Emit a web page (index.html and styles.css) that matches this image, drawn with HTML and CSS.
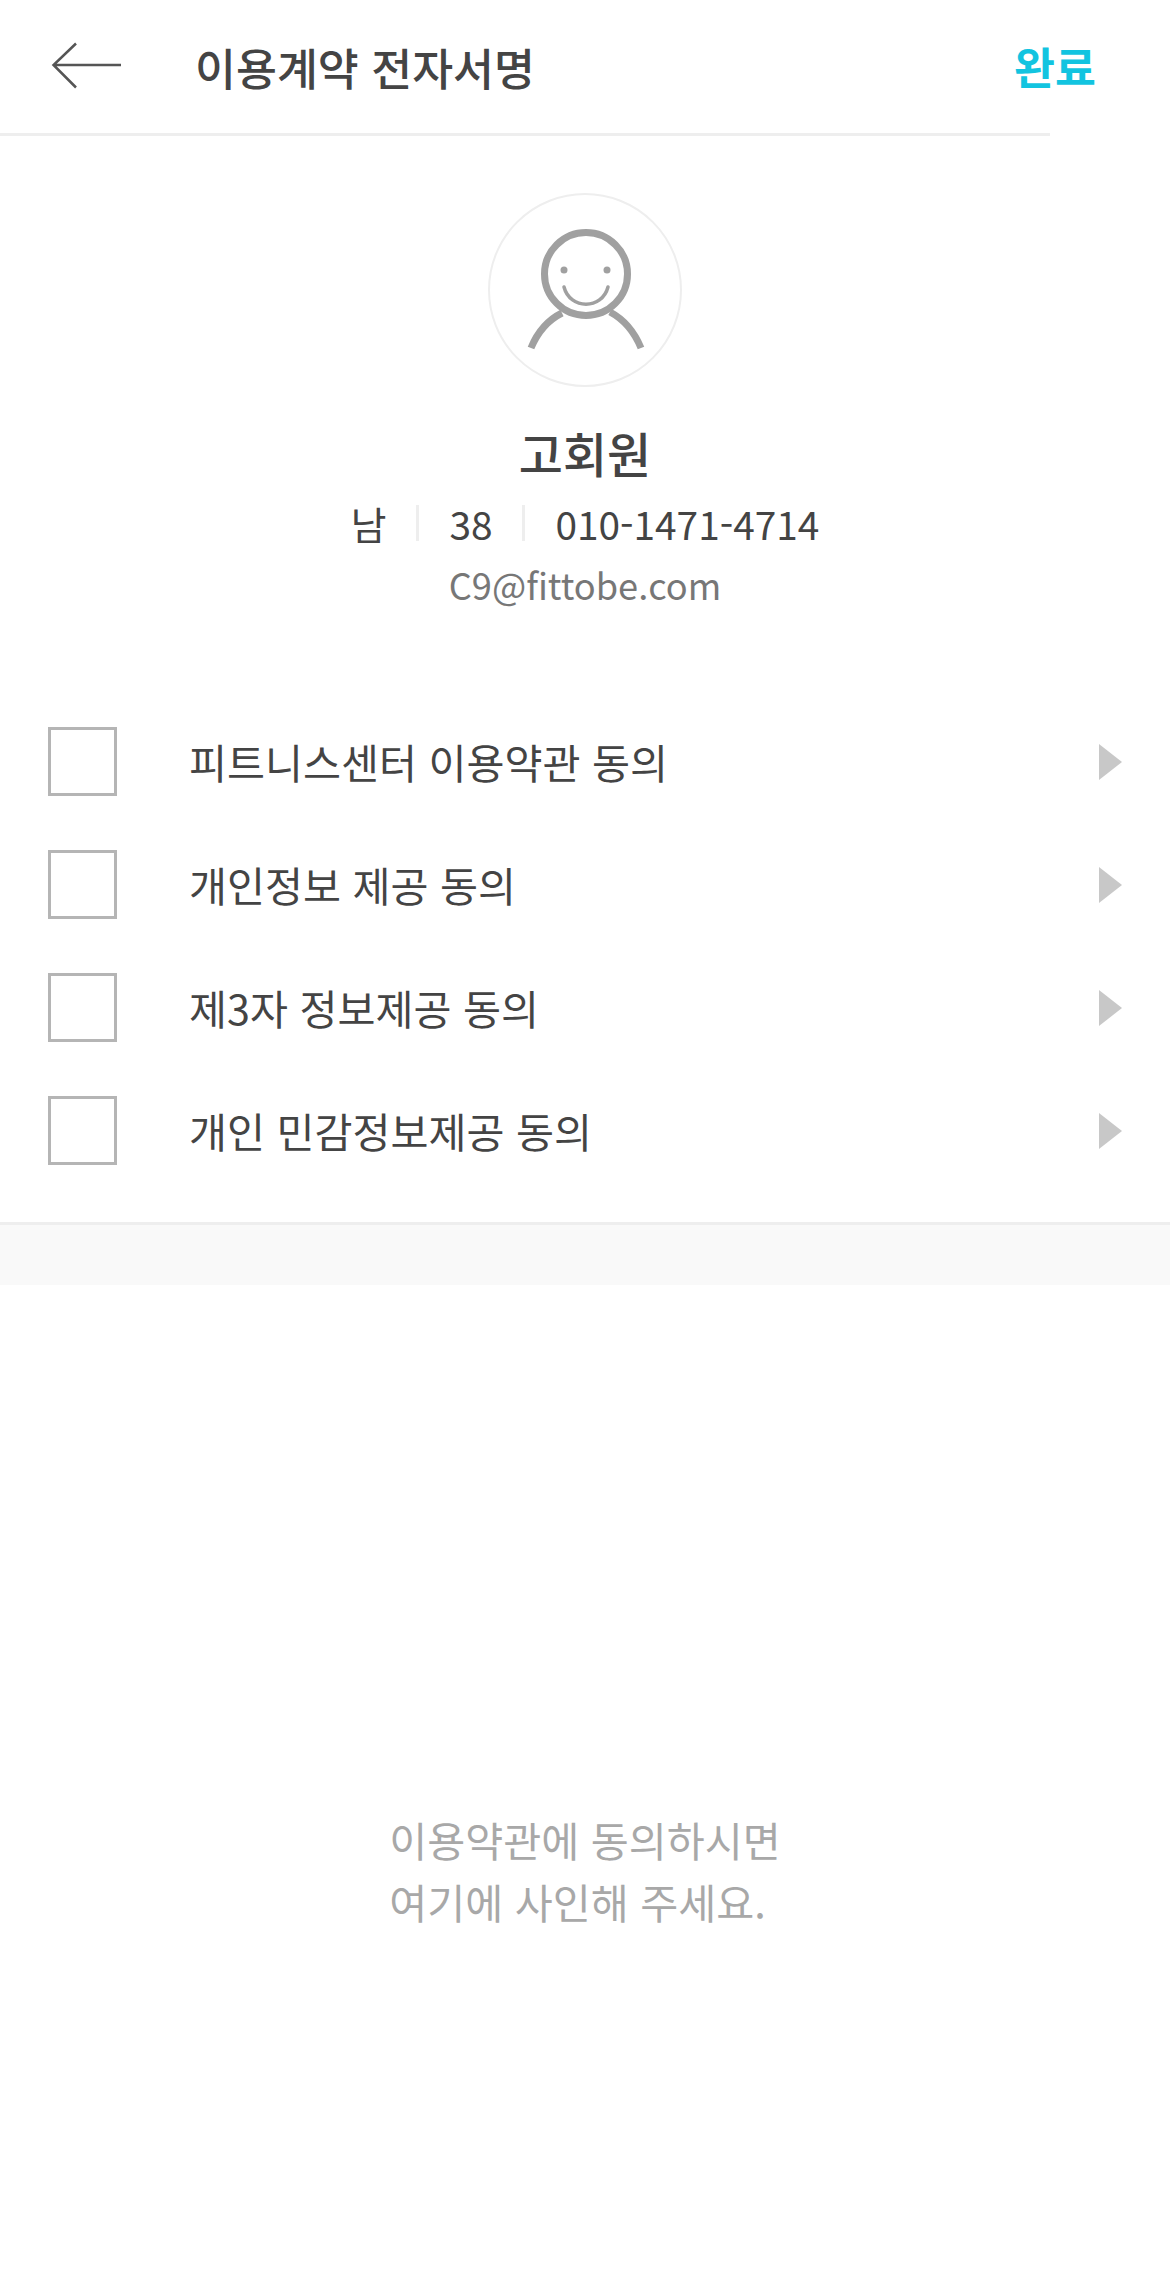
FILE: index.html
```html
<!DOCTYPE html>
<html lang="ko">
<head>
    <meta charset="UTF-8">
    <meta name="viewport" content="width=device-width, initial-scale=1.0">
    <title>이용계약 전자서명</title>
    <link rel="stylesheet" href="styles.css">
</head>
<body>

<!-- Header -->
<header class="top-bar">
    <svg class="back-icon" width="72" height="48" viewBox="0 0 72 48">
        <path d="M70 23H3M25 1.500L2.500 23L25 45.500" fill="none" stroke="#555" stroke-width="2.500"/>
    </svg>
    <h1 class="page-title">이용계약 전자서명</h1>
    <a class="done-link">완료</a>
</header>
<div class="top-line"></div>

<!-- Member info -->
<section class="profile">
    <div class="avatar">
        <svg width="124" height="124" viewBox="-2 -2 124 124">
            <circle cx="61" cy="44" r="41.500" fill="none" stroke="#a0a0a0" stroke-width="7"/>
            <circle cx="39" cy="40" r="3.500" fill="#a0a0a0"/>
            <circle cx="82" cy="40" r="3.500" fill="#a0a0a0"/>
            <path d="M39 57C45 80 77 80 83 57" fill="none" stroke="#a0a0a0" stroke-width="3.500" stroke-linecap="round"/>
            <path d="M6 118C13 101 23 90 37 83M116 118C109 101 100 90 85 82" fill="none" stroke="#a0a0a0" stroke-width="7"/>
        </svg>
    </div>
    <h2 class="member-name">고회원</h2>
    <div class="member-info">
        <span>남</span>
        <span>38</span>
        <span>010-1471-4714</span>
    </div>
    <p class="member-email">C9@fittobe.com</p>
</section>

<!-- Agreements -->
<ul class="terms">
    <li class="terms-row">
        <span class="check-box"></span>
        <span class="terms-label">피트니스센터 이용약관 동의</span>
        <span class="arrow"></span>
    </li>
    <li class="terms-row">
        <span class="check-box"></span>
        <span class="terms-label">개인정보 제공 동의</span>
        <span class="arrow"></span>
    </li>
    <li class="terms-row">
        <span class="check-box"></span>
        <span class="terms-label">제3자 정보제공 동의</span>
        <span class="arrow"></span>
    </li>
    <li class="terms-row">
        <span class="check-box"></span>
        <span class="terms-label">개인 민감정보제공 동의</span>
        <span class="arrow"></span>
    </li>
</ul>
<div class="band"></div>

<!-- Signature area -->
<section class="sign-area">
    <p class="sign-text">이용약관에 동의하시면<br>여기에 사인해 주세요.</p>
</section>

</body>
</html>
```

FILE: styles.css
```css
* {
    box-sizing: border-box;
}

body {
    font-family: "Noto Sans CJK KR", "Noto Sans", sans-serif;
    margin: 0;
    width: 1170px;
    height: 2289px;
    background-color: white;
    color: #444;
    overflow: hidden;
}

/* Header */
.top-bar {
    display: flex;
    align-items: center;
    height: 133px;
    padding-left: 51px;
}

.back-icon {
    display: block;
    margin-top: -2px;
}

.page-title {
    margin: 0 0 0 72px;
    font-size: 44.500px;
    font-weight: 500;
    line-height: 60px;
    color: #444;
}

.done-link {
    margin-top: -2px;
    margin-left: auto;
    margin-right: 74px;
    font-size: 44.500px;
    font-weight: 700;
    line-height: 60px;
    color: #12c4e0;
}

.top-line {
    width: 1050px;
    height: 3px;
    background-color: #eeeeee;
}

/* Member info */
.profile {
    display: flex;
    flex-direction: column;
    align-items: center;
    padding-top: 57px;
}

.avatar {
    display: flex;
    align-items: center;
    justify-content: center;
    width: 194px;
    height: 194px;
    border: 2px solid #eeeeee;
    border-radius: 50%;
}

.member-name {
    margin: 32px 0 0 0;
    font-size: 48px;
    font-weight: 500;
    line-height: 66px;
}

.member-info {
    display: flex;
    align-items: center;
    margin-top: 10px;
    font-size: 38.800px;
    line-height: 56px;
}

.member-info span + span {
    margin-left: 30px;
    padding-left: 33px;
    background: linear-gradient(#eeeeee, #eeeeee) left center / 3px 36px no-repeat;
}

.member-email {
    margin: 8px 0 0 0;
    font-size: 36.200px;
    line-height: 50px;
    color: #777;
}

/* Agreements */
.terms {
    list-style: none;
    margin: 91px 0 0 0;
    padding: 0;
}

.terms-row {
    display: flex;
    align-items: center;
    height: 123px;
    padding-left: 48px;
    padding-right: 48px;
}

.check-box {
    width: 69px;
    height: 69px;
    border: 3px solid #b5b5b5;
}

.terms-label {
    margin-left: 72px;
    padding-bottom: 1px;
    font-size: 41.300px;
    line-height: 60px;
    color: #444;
}

.arrow {
    margin-left: auto;
    width: 0;
    height: 0;
    border-top: 18px solid transparent;
    border-bottom: 18px solid transparent;
    border-left: 23px solid #c8c8c8;
}

.band {
    height: 63px;
    margin-top: 30px;
    background-color: #f9f9f9;
    border-top: 3px solid #eeeeee;
}

/* Signature area */
.sign-area {
    display: flex;
    justify-content: center;
    padding-top: 523px;
}

.sign-text {
    margin: 0;
    font-size: 41.300px;
    line-height: 62px;
    color: #a8a8a8;
}
```
